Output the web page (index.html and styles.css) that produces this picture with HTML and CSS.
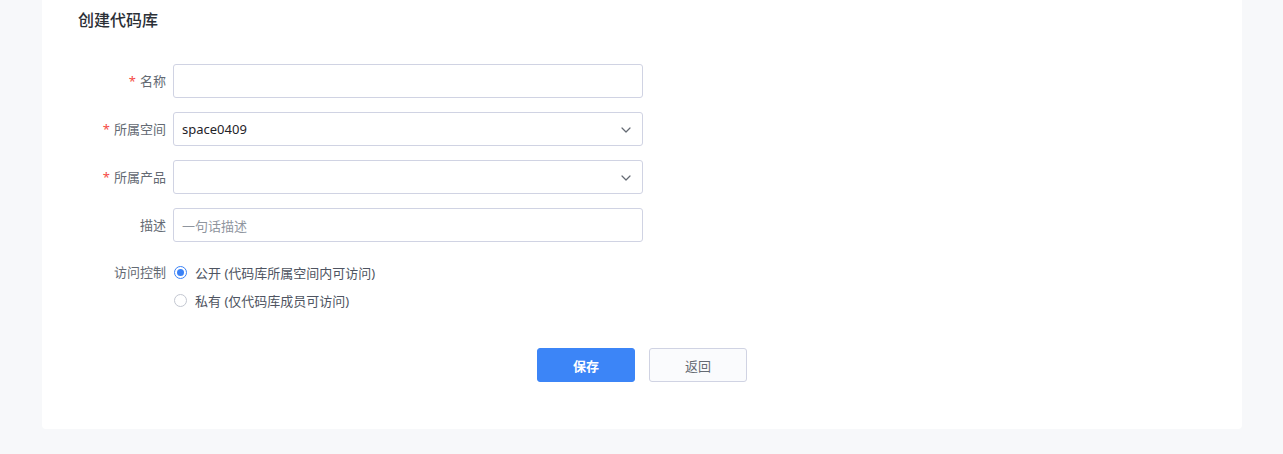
FILE: index.html
```html
<!DOCTYPE html>
<html lang="zh-CN">
<head>
<meta charset="utf-8">
<title>创建代码库</title>
<link rel="stylesheet" href="styles.css">
</head>
<body>
<div class="page">
  <div class="card">
    <h1 class="title">创建代码库</h1>
    <form class="form">
      <div class="row">
        <label class="label"><span class="req">*</span>名称</label>
        <div class="input"></div>
      </div>
      <div class="row">
        <label class="label"><span class="req">*</span>所属空间</label>
        <div class="input select"><span class="value">space0409</span>
          <svg class="chev" width="10" height="6" viewBox="0 0 10 6"><path d="M1 1l4 4 4-4" fill="none" stroke="#646a73" stroke-width="1.2" stroke-linecap="round" stroke-linejoin="round"/></svg>
        </div>
      </div>
      <div class="row">
        <label class="label"><span class="req">*</span>所属产品</label>
        <div class="input select"><span class="value"></span>
          <svg class="chev" width="10" height="6" viewBox="0 0 10 6"><path d="M1 1l4 4 4-4" fill="none" stroke="#646a73" stroke-width="1.2" stroke-linecap="round" stroke-linejoin="round"/></svg>
        </div>
      </div>
      <div class="row">
        <label class="label">描述</label>
        <div class="input"><span class="placeholder">一句话描述</span></div>
      </div>
      <div class="row radio-row">
        <label class="label radio-label">访问控制</label>
        <div class="radios">
          <div class="radio"><span class="dot checked"></span><span>公开 (代码库所属空间内可访问)</span></div>
          <div class="radio"><span class="dot"></span><span>私有 (仅代码库成员可访问)</span></div>
        </div>
      </div>
      <div class="actions">
        <button type="button" class="btn primary">保存</button>
        <button type="button" class="btn">返回</button>
      </div>
    </form>
  </div>
</div>
</body>
</html>
```
FILE: styles.css
```css
* { box-sizing: border-box; }
html, body { margin: 0; padding: 0; }
body {
  background: #f7f8fa;
  font-family: "Noto Sans", "Noto Sans CJK SC", sans-serif;
  font-size: 13px;
  color: #1f2329;
  width: 1283px;
  height: 454px;
  overflow: hidden;
}
.page { padding: 0 41px 0 42px; }
.card {
  background: #fff;
  width: 1200px;
  height: 429px;
  border-radius: 0 0 4px 4px;
  padding: 8px 36px 0;
}
.title {
  margin: 0;
  font-size: 16px;
  line-height: 24px;
  font-weight: 500;
  color: #2b2f36;
}
.form { margin-top: 32px; }
.row {
  display: grid;
  grid-template-columns: 88px 470px;
  column-gap: 7px;
  align-items: center;
  margin-bottom: 14px;
}
.label {
  text-align: right;
  color: #646a73;
  font-size: 13px;
  line-height: 20px;
  margin-top: -1px;
}
.req { color: #f54a45; margin-right: 4px; }
.input {
  height: 34px;
  border: 1px solid #d0d3e3;
  border-radius: 3px;
  background: #fff;
  display: flex;
  align-items: center;
  padding: 0 11px 0 8px;
  font-size: 13px;
}
.select { justify-content: space-between; }
.value { color: #1f2329; }
.placeholder { color: #8f959e; }
.chev { display: block; margin-top: 1px; }
.radio-row {
  margin-top: 16px;
  align-items: start;
  margin-bottom: 0;
}
.radio-label { line-height: 28px; margin-top: 0; }
.radios { display: flex; flex-direction: column; }
.radio {
  display: flex;
  align-items: center;
  height: 28px;
  color: #4e5461;
  padding-left: 1px;
}
.dot {
  width: 13px;
  height: 13px;
  border-radius: 50%;
  border: 1px solid #c3c7d1;
  margin-right: 8px;
  margin-top: 1px;
  flex: none;
  position: relative;
}
.dot.checked { border-color: #3b82f6; }
.dot.checked::after {
  content: "";
  position: absolute;
  left: 2px; top: 2px;
  width: 7px; height: 7px;
  border-radius: 50%;
  background: #3b82f6;
}
.actions {
  display: flex;
  justify-content: center;
  gap: 14px;
  margin-top: 34px;
}
.btn {
  width: 98px;
  height: 34px;
  border-radius: 3px;
  border: 1px solid #d0d3e3;
  background: #fafbfd;
  color: #646a73;
  font-family: inherit;
  font-size: 13px;
  padding: 0;
  cursor: pointer;
}
.btn.primary {
  background: #3c85f7;
  border-color: #3c85f7;
  color: #fff;
  font-weight: 600;
}
```
